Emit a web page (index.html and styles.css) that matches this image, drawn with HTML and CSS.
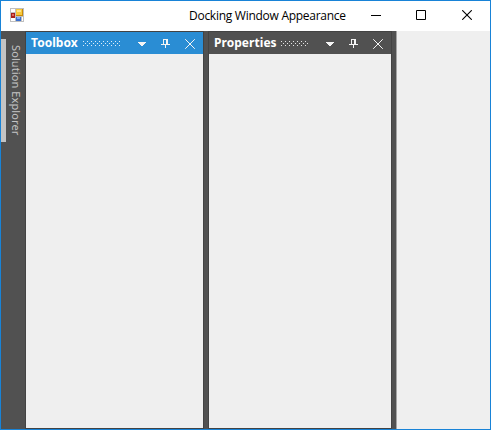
FILE: index.html
```html
<!DOCTYPE html>
<html lang="en">
<head>
<meta charset="utf-8">
<title>Docking Window Appearance</title>
<link rel="stylesheet" href="styles.css">
</head>
<body>
<div class="window">
  <header class="titlebar">
    <svg class="app-icon" width="14" height="14" shape-rendering="crispEdges">
      <path fill="#bfbfbf" d="M0 0h14v14H0z"/>
      <path fill="#fff" d="M1 1h4v3H1zM1 10h4v3H1zM12 9h1v4h-1z"/>
      <path fill="#a8201a" d="M1 5h4v5H1z"/><path fill="#e0685c" d="M2 6h2v2H2z"/>
      <path fill="#c98a08" d="M6 1h7v7H6z"/><path fill="#f7c93c" d="M6 1h6v6H6z"/><path fill="#ffe48a" d="M7 2h4v2H7z"/>
      <path fill="#3c70cf" d="M6 9h5v4H6z"/><path fill="#86aef0" d="M7 9h3v2H7z"/>
    </svg>
    <h1 class="title">Docking Window Appearance</h1>
    <div class="controls">
      <svg width="10" height="10" shape-rendering="crispEdges"><path d="M0 5h10v1H0z"/></svg>
      <svg width="10" height="10"><path fill="none" stroke="#000" d="M.5 .5h9v9h-9z"/></svg>
      <svg class="close" width="10" height="10"><path fill="none" stroke="#000" stroke-width="1.1" d="M.2 .2l9.6 9.6M9.8 .2L.2 9.8"/></svg>
    </div>
  </header>
  <div class="workspace">
    <nav class="rail"><div class="marker"></div><span class="rail-label">Solution Explorer</span></nav>
    <section class="panel toolbox active">
      <div class="panel-head">
        <h2>Toolbox</h2><i class="grip"></i>
        <svg class="tools" width="57" height="12">
          <path fill="currentColor" shape-rendering="crispEdges" d="M0 4h8v1h-1v1h-1v1h-1v1h-2v-1h-1v-1h-1v-1h-1z"/>
          <path fill="currentColor" shape-rendering="crispEdges" fill-rule="evenodd" d="M25 1h5v5h2v1h-4v3h-1v-3h-4v-1h2zM26 2v4h2v-4z"/>
          <path fill="none" stroke="currentColor" d="M47.2 1.2l9.6 9.6M56.8 1.2l-9.6 9.6"/>
        </svg>
      </div>
      <div class="panel-body"></div>
    </section>
    <section class="panel properties">
      <div class="panel-head">
        <h2>Properties</h2><i class="grip"></i>
        <svg class="tools" width="57" height="12">
          <path fill="currentColor" shape-rendering="crispEdges" d="M0 4h8v1h-1v1h-1v1h-1v1h-2v-1h-1v-1h-1v-1h-1z"/>
          <path fill="currentColor" shape-rendering="crispEdges" fill-rule="evenodd" d="M25 1h5v5h2v1h-4v3h-1v-3h-4v-1h2zM26 2v4h2v-4z"/>
          <path fill="none" stroke="currentColor" d="M47.2 1.2l9.6 9.6M56.8 1.2l-9.6 9.6"/>
        </svg>
      </div>
      <div class="panel-body"></div>
    </section>
    <main class="client"></main>
  </div>
</div>
</body>
</html>
```
FILE: styles.css
```css
* { box-sizing: border-box; }
body { margin: 0; }
h1, h2 { margin: 0; }
.window {
  width: 491px;
  height: 430px;
  border: 1px solid #1883d7;
  background: #fff;
  display: flex;
  flex-direction: column;
}
.titlebar {
  height: 30px;
  flex: none;
  display: flex;
  align-items: flex-start;
  padding-left: 9px;
}
.app-icon { margin-top: 7px; }
.title {
  width: 158px;
  margin-left: 165px;
  font: 400 12px/30px "Open Sans", "Noto Sans", sans-serif;
  letter-spacing: -0.27px;
  white-space: nowrap;
  color: #000;
}
.controls { display: flex; gap: 35px; margin: 9px 0 0 24px; }
.close { margin-left: 1px; }
.workspace {
  flex: 1;
  display: flex;
  background: #515151;
}
.rail {
  width: 24px;
  display: flex;
  padding-top: 8px;
}
.marker { width: 5px; height: 103px; background: #c4c4c4; }
.rail-label {
  writing-mode: vertical-rl;
  margin: 6px 0 0 2px;
  font: 11px/17px "Noto Sans", sans-serif;
  letter-spacing: 0.1px;
  color: #c4c4c4;
  white-space: nowrap;
}
.panel {
  display: flex;
  flex-direction: column;
  border: 1px solid #434343;
}
.toolbox { width: 179px; }
.properties { width: 184px; margin-left: 4px; }
.panel-head {
  height: 22px;
  padding: 0 8px 0 5px;
  display: flex;
  align-items: center;
  background: #515151;
  color: #fff;
}
.active .panel-head { background: #2a8dd4; }
.panel-head h2 {
  font: 700 12px/22px "Noto Sans", sans-serif;
  letter-spacing: 0.05px;
  white-space: nowrap;
}
.toolbox h2 { width: 52px; }
.properties h2 { width: 67px; }
.grip {
  height: 5px;
  background:
    repeating-linear-gradient(90deg, currentColor 0 1px, transparent 1px 4px) 0 0 / 100% 1px no-repeat,
    repeating-linear-gradient(90deg, transparent 0 2px, currentColor 2px 3px, transparent 3px 4px) 0 2px / 100% 1px no-repeat,
    repeating-linear-gradient(90deg, currentColor 0 1px, transparent 1px 4px) 0 4px / 100% 1px no-repeat;
  opacity: 0.85;
}
.toolbox .grip { width: 38px; }
.properties .grip { width: 28px; }
.tools { margin: 1px 0 0 auto; color: #f4f4f4; }
.panel-body { flex: 1; background: #efefef; }
.client {
  flex: 1;
  margin-left: 4px;
  border-left: 1px solid #a5a5a5;
  background: #efefef;
}
```
